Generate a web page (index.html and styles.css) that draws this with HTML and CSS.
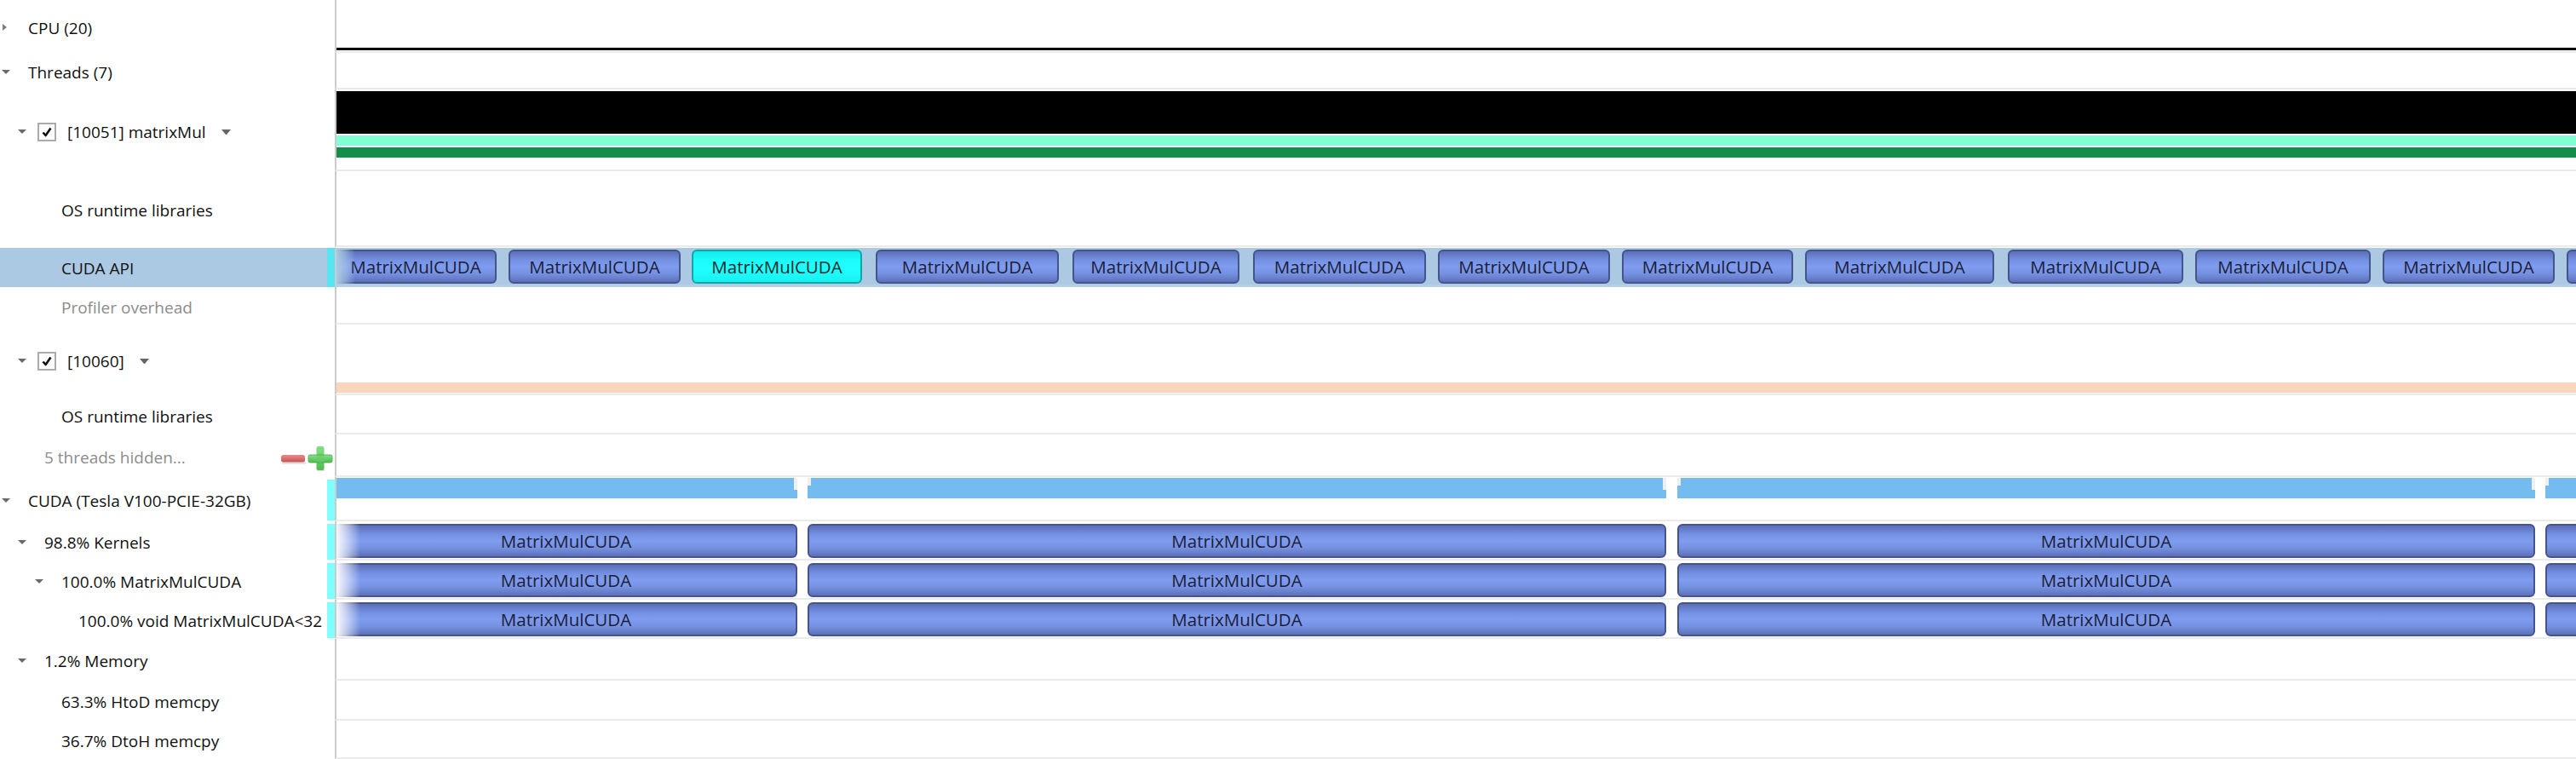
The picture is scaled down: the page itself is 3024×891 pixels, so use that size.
FILE: index.html
```html
<!DOCTYPE html>
<html>
<head>
<meta charset="utf-8">
<title>Timeline</title>
<link rel="stylesheet" href="styles.css">
</head>
<body>
<div class="view">

  <div class="row h62">
    <div class="lbl l0"><span class="tw closed"></span><span class="txt">CPU (20)</span></div>
    <div class="track"><div class="cpu-line"></div></div>
  </div>

  <div class="row h43">
    <div class="lbl l0"><span class="tw open"></span><span class="txt">Threads (7)</span></div>
    <div class="track"></div>
  </div>

  <div class="row h96">
    <div class="lbl l1 thread">
      <span class="tw open"></span>
      <span class="cb"><svg width="22" height="22" viewBox="0 0 22 22"><rect x="1" y="1" width="20" height="20" fill="#fdfdfd" stroke="#ababab" stroke-width="2"/><path d="M6.5 11.5 L9.6 15 L15.5 6.5" fill="none" stroke="#111" stroke-width="2.6" stroke-linejoin="round"/></svg></span>
      <span class="txt">[10051] matrixMul</span>
      <span class="dd"></span>
    </div>
    <div class="track stack">
      <div class="band black"></div>
      <div class="band aqua"></div>
      <div class="band green"></div>
    </div>
  </div>

  <div class="row h89">
    <div class="lbl l2"><span class="tw"></span><span class="txt">OS runtime libraries</span></div>
    <div class="track"></div>
  </div>

  <div class="row h47 sel">
    <div class="lbl l2"><span class="tw"></span><span class="txt">CUDA API</span><span class="mark"></span></div>
    <div class="track fade api">
      <div class="box ab cut" style="left:0;width:188px">MatrixMulCUDA</div>
      <div class="box ab" style="left:202px;width:202px">MatrixMulCUDA</div>
      <div class="box ab hot" style="left:417px;width:200px">MatrixMulCUDA</div>
      <div class="box ab" style="left:633px;width:215px">MatrixMulCUDA</div>
      <div class="box ab" style="left:864px;width:196px">MatrixMulCUDA</div>
      <div class="box ab" style="left:1076px;width:203px">MatrixMulCUDA</div>
      <div class="box ab" style="left:1293px;width:202px">MatrixMulCUDA</div>
      <div class="box ab" style="left:1509px;width:201px">MatrixMulCUDA</div>
      <div class="box ab" style="left:1724px;width:222px">MatrixMulCUDA</div>
      <div class="box ab" style="left:1962px;width:206px">MatrixMulCUDA</div>
      <div class="box ab" style="left:2182px;width:206px">MatrixMulCUDA</div>
      <div class="box ab" style="left:2402px;width:202px">MatrixMulCUDA</div>
      <div class="box ab" style="left:2618px;width:40px"></div>
    </div>
  </div>

  <div class="row h44">
    <div class="lbl l2"><span class="tw"></span><span class="txt dim">Profiler overhead</span></div>
    <div class="track"></div>
  </div>

  <div class="row h83">
    <div class="lbl l1 thread">
      <span class="tw open"></span>
      <span class="cb"><svg width="22" height="22" viewBox="0 0 22 22"><rect x="1" y="1" width="20" height="20" fill="#fdfdfd" stroke="#ababab" stroke-width="2"/><path d="M6.5 11.5 L9.6 15 L15.5 6.5" fill="none" stroke="#111" stroke-width="2.6" stroke-linejoin="round"/></svg></span>
      <span class="txt">[10060]</span>
      <span class="dd"></span>
    </div>
    <div class="track"><div class="orange"></div></div>
  </div>

  <div class="row h46">
    <div class="lbl l2"><span class="tw"></span><span class="txt">OS runtime libraries</span></div>
    <div class="track"></div>
  </div>

  <div class="row h50">
    <div class="lbl l1">
      <span class="tw"></span><span class="txt dim">5 threads hidden...</span>
      <svg class="pm" width="62" height="32" viewBox="0 0 62 32">
        <defs>
          <linearGradient id="rg" x1="0" y1="0" x2="0" y2="1"><stop offset="0" stop-color="#ea8c8c"/><stop offset="1" stop-color="#c85252"/></linearGradient>
          <linearGradient id="gg" x1="0" y1="0" x2="0" y2="1"><stop offset="0" stop-color="#86e086"/><stop offset="1" stop-color="#4fbb4f"/></linearGradient>
        </defs>
        <rect x="1" y="21" width="28" height="3" rx="1.5" fill="#e2e2e2"/>
        <rect x="0" y="13" width="28" height="8.5" rx="2.5" fill="url(#rg)"/>
        <rect x="42" y="30" width="9" height="2" fill="#e0e0e0"/>
        <rect x="32" y="13" width="28" height="9" rx="2" fill="url(#gg)"/>
        <rect x="41.5" y="3" width="9" height="28" rx="2" fill="url(#gg)"/>
        <rect x="32" y="13" width="28" height="9" rx="2" fill="none" stroke="#45a845" stroke-width="0.8"/>
      </svg>
    </div>
    <div class="track"></div>
  </div>

  <div class="row h52">
    <div class="lbl l0"><span class="tw open"></span><span class="txt">CUDA (Tesla V100-PCIE-32GB)</span><span class="mark"></span></div>
    <div class="track">
      <div class="seg e" style="left:0;width:541px"></div>
      <div class="seg s e" style="left:553px;width:1008px"></div>
      <div class="seg s e" style="left:1574px;width:1007px"></div>
      <div class="seg s" style="left:2593px;width:60px"></div>
    </div>
  </div>

  <div class="row h46">
    <div class="lbl l1"><span class="tw open"></span><span class="txt">98.8% Kernels</span><span class="mark"></span></div>
    <div class="track fade">
      <div class="box kb cut" style="left:0;width:541px">MatrixMulCUDA</div>
      <div class="box kb" style="left:553px;width:1008px">MatrixMulCUDA</div>
      <div class="box kb" style="left:1574px;width:1007px">MatrixMulCUDA</div>
      <div class="box kb" style="left:2593px;width:60px"></div>
    </div>
  </div>

  <div class="row h46">
    <div class="lbl l2"><span class="tw open"></span><span class="txt">100.0% MatrixMulCUDA</span><span class="mark"></span></div>
    <div class="track fade">
      <div class="box kb cut" style="left:0;width:541px">MatrixMulCUDA</div>
      <div class="box kb" style="left:553px;width:1008px">MatrixMulCUDA</div>
      <div class="box kb" style="left:1574px;width:1007px">MatrixMulCUDA</div>
      <div class="box kb" style="left:2593px;width:60px"></div>
    </div>
  </div>

  <div class="row h46">
    <div class="lbl l3"><span class="tw"></span><span class="txt">100.0% void MatrixMulCUDA&lt;32</span><span class="mark"></span></div>
    <div class="track fade">
      <div class="box kb cut" style="left:0;width:541px">MatrixMulCUDA</div>
      <div class="box kb" style="left:553px;width:1008px">MatrixMulCUDA</div>
      <div class="box kb" style="left:1574px;width:1007px">MatrixMulCUDA</div>
      <div class="box kb" style="left:2593px;width:60px"></div>
    </div>
  </div>

  <div class="row h49">
    <div class="lbl l1"><span class="tw open"></span><span class="txt">1.2% Memory</span></div>
    <div class="track"></div>
  </div>

  <div class="row h47">
    <div class="lbl l2"><span class="tw"></span><span class="txt">63.3% HtoD memcpy</span></div>
    <div class="track"></div>
  </div>

  <div class="row h45">
    <div class="lbl l2"><span class="tw"></span><span class="txt">36.7% DtoH memcpy</span></div>
    <div class="track"></div>
  </div>

</div>
</body>
</html>
```

FILE: styles.css
```css
* { box-sizing: border-box; }

html, body {
  margin: 0;
  padding: 0;
  background: #ffffff;
}

body {
  width: 3024px;
  height: 891px;
  overflow: hidden;
  font-family: "Open Sans", "Noto Sans", sans-serif;
}

.view {
  display: flex;
  flex-direction: column;
}

.row {
  display: flex;
  flex: none;
}

.h43 { height: 43px; }
.h44 { height: 44px; }
.h45 { height: 45px; }
.h46 { height: 46px; }
.h47 { height: 47px; }
.h49 { height: 49px; }
.h50 { height: 50px; }
.h52 { height: 52px; }
.h62 { height: 62px; }
.h83 { height: 83px; }
.h89 { height: 89px; }
.h96 { height: 96px; }

/* ---------- left tree ---------- */
.lbl {
  width: 393px;
  flex: none;
  position: relative;
  display: flex;
  align-items: center;
  padding-top: 3px;
  font-size: 19px;
  color: #111111;
  white-space: nowrap;
}

.l0 { padding-left: 2px; }
.l1 { padding-left: 21px; }
.l2 { padding-left: 41px; }
.l3 { padding-left: 61px; }

.tw {
  width: 10px;
  height: 10px;
  flex: none;
  margin-right: 21px;
  position: relative;
}

.tw.open::before {
  content: "";
  position: absolute;
  left: 0;
  top: 2px;
  border-left: 5px solid transparent;
  border-right: 5px solid transparent;
  border-top: 5px solid #6a6a6a;
}

.tw.closed::before {
  content: "";
  position: absolute;
  left: 1px;
  top: 0;
  border-top: 4.5px solid transparent;
  border-bottom: 4.5px solid transparent;
  border-left: 5px solid #7c7c7c;
}

.thread .tw { margin-right: 13px; }

.cb {
  width: 22px;
  height: 22px;
  flex: none;
  margin-right: 13px;
  display: flex;
}

.dd {
  width: 11px;
  height: 6px;
  flex: none;
  margin-left: 18px;
  border-left: 5.5px solid transparent;
  border-right: 5.5px solid transparent;
  border-top: 6px solid #666666;
}

.txt.dim { color: #8c8c8c; }

.pm {
  margin-left: auto;
  margin-right: 1px;
  flex: none;
}

.mark {
  position: absolute;
  right: 0;
  top: 3px;
  bottom: 1px;
  width: 9px;
  background: #80ffff;
}

/* ---------- timeline tracks ---------- */
.track {
  flex: 1;
  position: relative;
  overflow: hidden;
  border-left: 2px solid #cbcbcb;
  border-bottom: 2px solid #ebebeb;
}

.cpu-line {
  position: absolute;
  left: 0;
  right: 0;
  bottom: 1px;
  height: 3px;
  background: #000000;
}

.track.stack {
  display: flex;
  flex-direction: column;
  gap: 2px;
  padding-top: 2px;
}

.band { height: 12px; flex: none; }
.band.black { height: 50px; background: #000000; }
.band.aqua { background: #80ffd5; }
.band.green { background: #138e48; }

.orange {
  position: absolute;
  left: 0;
  right: 0;
  bottom: 1px;
  height: 12px;
  background: #fbd6bd;
}

/* selected row (CUDA API) */
.sel .lbl,
.sel .track {
  background: #abc9e3;
  border-top: 1px solid #ffffff;
}

.sel .lbl { padding-top: 2px; }

.sel .track { border-bottom: 3px solid #b4cfe6; }

.sel .mark {
  top: 0;
  bottom: 0;
  background: #57e5f1;
}

/* GPU utilisation segments */
.seg {
  position: absolute;
  top: 1px;
  height: 24px;
  background: #74bbf0;
}

.seg.e::after {
  content: "";
  position: absolute;
  right: 0;
  top: 0;
  width: 4px;
  height: 14px;
  background: #efefef;
}

.seg.s::before {
  content: "";
  position: absolute;
  left: 0;
  top: 0;
  width: 4px;
  height: 9px;
  background: #efefef;
}

/* range boxes */
.box {
  position: absolute;
  height: 40px;
  display: flex;
  align-items: center;
  justify-content: center;
  overflow: hidden;
  white-space: nowrap;
  border: 2px solid #45548a;
  border-radius: 6px;
  background: linear-gradient(180deg, #5b6eb9 0%, #7390e1 28%, #7f9cf0 50%, #7590e0 74%, #5d70b8 100%);
  font-size: 20.5px;
  color: #1b2036;
}

.box.cut {
  border-left: 0;
  border-top-left-radius: 0;
  border-bottom-left-radius: 0;
}

.ab { top: 2px; }
.kb { top: 3px; }

.box.hot {
  border-color: #11a7a7;
  background: linear-gradient(180deg, #12eaea 0%, #1dfcfc 30%, #20ffff 55%, #18f0f0 100%);
  color: #0e2a2a;
}

.fade::before {
  content: "";
  position: absolute;
  left: 0;
  top: 0;
  bottom: 0;
  width: 28px;
  z-index: 3;
  background: linear-gradient(90deg, rgba(255, 255, 255, 0.95) 0%, rgba(255, 255, 255, 0.55) 45%, rgba(255, 255, 255, 0) 100%);
}

.fade.api::before {
  width: 22px;
  background: linear-gradient(90deg, rgba(171, 201, 227, 1) 0%, rgba(171, 201, 227, 0.6) 45%, rgba(171, 201, 227, 0) 100%);
}
```
